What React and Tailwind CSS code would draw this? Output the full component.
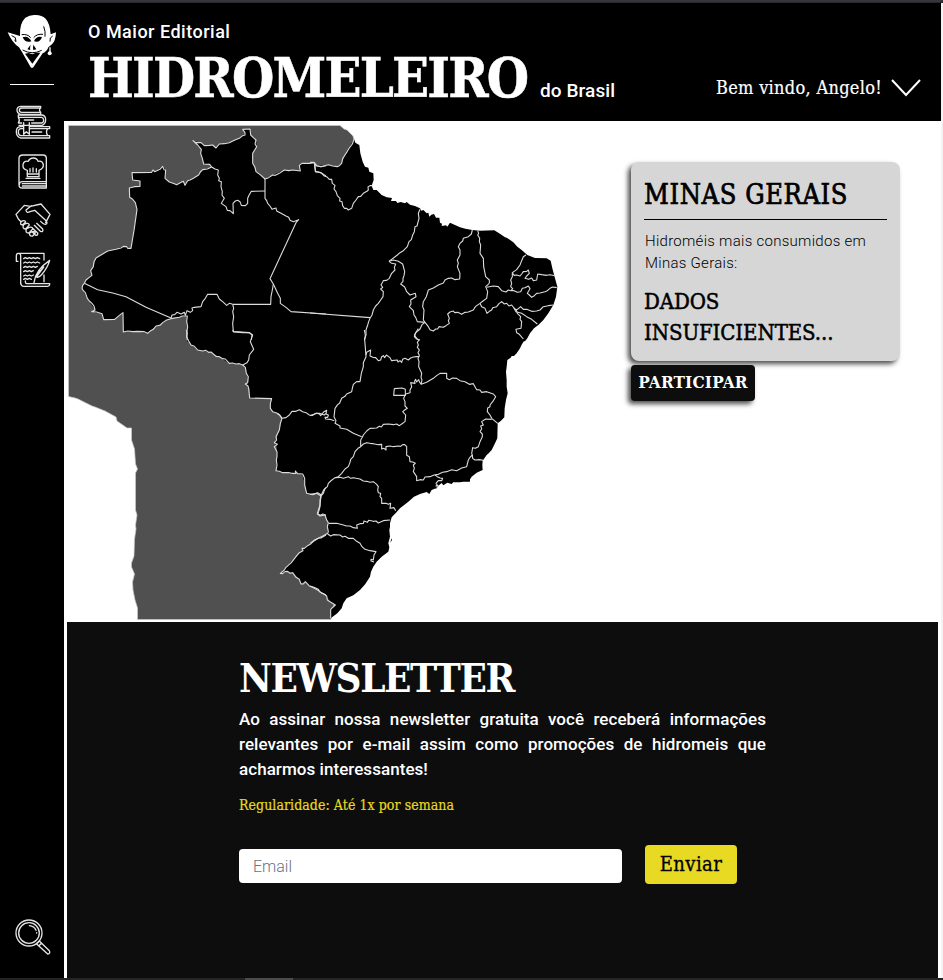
import React from "react";

const serif = "font-['DejaVu_Serif_Condensed','DejaVu_Serif',serif] [font-stretch:condensed]";

// Map pieces: each sheet has its own origin and is drawn at three units per pixel.
const sheets = [
  {
    t: "translate(66 120) scale(.33333)",
    fill: [
      "55,490 60,480 78,466 74,452 82,440 90,414 125,393 150,388 172,379 195,385 213,268 208,248 191,232 190,204 222,199 222,183 200,180 198,158 257,157 261,150 266,155 290,139 299,150 297,175 310,186 332,194 352,184 357,194 365,182 398,165 410,149 437,141 431,133 413,132 409,115 404,100 406,88 381,62 405,68 415,77 440,75 450,84 460,72 490,68 520,55 537,40 530,28 552,27 554,45 570,60 572,80 560,100 560,130 570,155 597,177 620,165 655,150 680,150 703,153 700,136 708,130 745,128 750,137 780,137 780,665 364,665 362,588 340,592 315,594 290,608 270,618 245,640 215,634 172,636 171,578 146,598 113,599 108,581 77,575 87,570 64,535 48,505 50,496",
    ],
    lines: [
      "364,660 362,640 365,620 362,605 364,588 350,588 340,592 315,596 302,600 290,608 282,616 270,618 262,628 254,632 245,640 235,635 215,634 200,635 185,633 172,636 171,578 160,586 146,598 113,599 108,581 92,576 77,575 87,570 84,558 78,550 70,543 64,535 58,518 52,512 48,505 50,496 55,490 60,480 70,472 78,466 74,452 82,440 84,425 90,414 110,402 125,393 150,388 165,384 172,379 182,380 185,385 195,385 205,325 213,268 208,248 200,238 191,232 190,204 205,200 222,199 222,183 200,180 198,158 257,157 261,150 266,155 282,148 290,139 294,149 299,150 297,175 310,186 325,191 332,194 343,188 352,184 357,196 365,182 372,180 382,175 398,165 403,156 410,149 424,147 437,141 431,133 413,132 409,115 404,100 406,88 395,75 381,62 390,68 405,68 415,77 430,76 440,75 450,84 460,72 475,71 490,68 505,61 520,55 530,47 537,45 537,38 530,28 552,27 554,45 562,53 570,60 567,72 572,80 566,90 560,100 560,130 567,142 570,155 585,166 597,177 608,173 620,165 628,166 640,160 655,150 668,152 680,150 703,153 700,136 708,130 730,130 745,128 750,137 765,140 780,137",
      "55,490 95,509 140,519 180,530 240,562 315,594",
      "437,141 447,147 457,150 455,165 460,175 458,182 466,185 465,200 469,215 468,225 475,235 466,250 480,260 484,271 492,272 502,281 501,250 508,243 515,241 522,245 526,256 538,257 545,250 545,235 549,226 556,214 597,213",
      "597,177 597,235 602,242 605,250 612,258 618,268 630,264 632,273 645,280 660,288 668,292 672,301 682,305 698,299 690,308 612,476 622,492 619,510 615,530 614,553 500,553",
      "622,492 628,505 635,520 643,535 643,550 660,562 675,575 780,582",
      "745,130 748,155 765,158 780,168",
      "500,553 503,565 500,575 503,590 500,610 502,635 550,638 558,645 556,660",
      "315,594 318,585 326,584 333,577 345,582 355,577 358,586 363,572 373,577 380,572 378,564 385,562 405,560 410,545 418,535 425,523 453,523 460,537 470,545 482,556 490,550 500,553",
    ],
  },
  {
    t: "translate(310 120) scale(.33333)",
    fill: [
      "0,127 12,127 20,137 45,137 55,134 82,140 95,130 105,105 132,58 136,68 148,75 151,100 158,125 165,140 175,143 178,155 190,160 191,180 185,197 190,210 200,210 215,225 230,232 246,234 243,243 258,243 262,249 272,246 285,250 290,246 300,254 315,258 330,265 334,272 340,270 350,280 355,278 358,290 364,284 372,282 378,293 388,293 390,308 396,311 395,318 408,316 412,320 420,308 430,313 450,322 466,326 487,330 510,332 553,331 572,343 585,352 590,353 610,367 622,380 635,390 652,405 675,414 710,415 722,422 727,445 735,475 742,500 738,530 730,555 715,580 700,600 685,615 672,625 660,640 652,655 645,664 0,664",
    ],
    lines: [
      "0,127 12,127 20,137 33,140 45,137 55,134 68,138 82,140 88,137 95,130 98,116 105,105 112,94 118,84 127,72 132,58",
      "14,130 17,155 25,156 35,160 43,168 50,170 58,178 65,178 67,190 75,196 72,207 78,215 82,227 90,235 89,243 96,245 98,257 103,265 110,265 115,270 125,265 130,250 138,240 145,230 152,229 160,220 172,213 175,210 174,201 180,197 188,197",
      "330,268 325,280 327,295 321,318 315,320 313,335 308,345 304,359 297,365 292,380 280,392 270,398 262,405 237,424",
      "237,424 250,420 265,424 278,432 284,455 282,467 279,475 279,484 272,492 284,501 290,515 300,525 316,520 318,530 302,540 303,552 298,560 310,572 312,585 317,592 322,605 345,607",
      "237,424 245,430 257,432 253,442 255,450 245,460 238,475 230,481 220,482 213,495 218,502 212,507 220,515 219,530 212,540 205,550 197,558 190,570 186,585 180,595 176,605 173,615 168,630 168,645 163,660",
      "0,579 180,593",
      "487,330 484,342 475,350 460,355 458,363 450,370 445,380 450,390 450,405 442,420 445,430 442,440 450,460 449,477 435,479 425,474 415,475 405,480 400,489 385,495 370,504 355,510 349,530 340,545 338,560 342,570 340,600 345,607 355,620 360,629 370,633 377,627 383,627 387,620 400,622 408,617 418,610 415,602 418,595 413,582 420,576 430,573 434,578 443,577 455,583 465,577 475,576 490,570 496,560 510,550 519,543 530,535 533,515 527,500 538,490",
      "503,332 506,340 503,345 509,355 508,365 512,375 510,400 520,415 521,440 527,470 538,480 538,490",
      "530,502 550,498 565,500 575,512 588,516 595,510 603,512 612,512 622,517 632,515 637,505 645,503 655,498 660,506 652,520 658,525 665,532 673,527 680,520 690,519 705,515 712,512 720,505 728,501 740,503",
      "648,405 640,410 635,422 630,435 620,449 607,458 607,470 602,480 605,490 602,500 608,506 603,512",
      "607,458 612,466 620,465 630,468 635,462 640,455 650,454 655,450 658,460 650,468 645,475 656,478 665,474 670,482 680,480 683,462 695,464 710,466 720,464 735,467",
      "510,550 515,560 525,565 531,580 538,574 545,570 548,563 560,560 567,551 575,545 583,552 590,550 597,558 605,555 612,564 618,570 625,566 632,560 640,568 650,568 665,574 680,573 690,570 700,560 715,557 730,555",
      "612,564 618,575 635,580 650,590 665,598 682,612",
      "618,568 622,580 632,590 630,598 635,605 633,625 618,628 620,638 628,643 640,657",
      "345,607 336,614 330,627 325,632 318,637 313,650 320,657 330,660",
    ],
  },
  {
    t: "translate(66 330) scale(.33333)",
    fill: [
      "361,0 364,25 375,45 395,60 435,66 490,100 530,105 538,115 545,140 547,155 540,162 550,175 551,204 617,206 613,235 620,245 638,252 648,265 640,300 627,338 632,350 633,380 631,422 650,428 690,430 710,435 722,490 740,494 755,488 766,495 762,530 755,553 785,556 785,0",
      "785,612 745,632 715,655 660,712 643,730 650,731 665,724 680,728 700,748 705,760 718,755 730,768 755,780 785,798",
    ],
    lines: [
      "361,0 364,10 362,20 368,33 375,45 385,49 395,60 410,63 420,61 428,67 435,66 450,79 460,80 470,86 478,87 490,100 500,99 510,102 520,101 530,105 538,112 541,130 547,140 545,158 538,162 546,168 548,175 551,204 617,206 613,220 613,235 620,245 630,248 638,252 648,265 643,280 640,300 630,320 632,330 625,338 634,343 625,350 633,365 633,380 631,390 633,405 630,422 640,424 650,428 670,428 678,430 690,430 688,423 695,431 710,432 716,445 716,465 722,490 740,494 755,488 766,495 762,510 762,530 758,545 755,553 764,556 770,552 780,556",
      "780,615 765,624 758,624 745,632 735,641 725,647 715,655 708,655 711,662 700,668 690,680 676,698 660,712 655,720 643,730 650,731 657,725 665,724 672,730 680,728 690,742 700,748 705,762 712,762 718,755 730,768 742,773 755,780 768,790 780,795",
      "500,0 502,5 530,8 550,8 560,15 553,35 563,58 550,75 548,90 543,98 530,105",
      "635,252 642,256 648,265 660,263 670,255 678,244 690,244 700,239 710,245 720,248 730,255 740,256 750,250 760,250 775,255 780,250",
      "766,495 773,480 780,473",
    ],
  },
  {
    t: "translate(310 330) scale(.33333)",
    fill: [
      "0,-4 665,-4 656,11 645,28 635,44 630,55 620,70 612,78 605,78 602,83 592,90 590,110 588,125 590,150 590,170 593,190 588,210 584,235 583,262 573,272 563,280 562,325 555,340 545,360 536,370 530,375 518,392 517,405 518,420 500,428 485,440 480,448 480,455 460,455 450,457 430,456 440,447 433,453 425,462 412,458 400,466 395,459 385,467 375,478 385,472 365,480 358,492 350,486 330,492 312,500 295,515 270,535 258,548 245,562 240,580 240,590 238,600 240,620 235,640 238,652 235,665 215,680 200,695 190,710 183,725 180,740 166,762 150,780 130,796 110,805 100,820 95,835 82,850 62,865 62,838 76,825 60,815 50,798 25,778 0,768 0,640 25,625 53,610 55,578 45,555 22,553 30,525 33,498 20,490 0,493",
      "244,625 241,638 246,630",
    ],
    lines: [
      "0,493 20,490 33,498 30,525 22,551 30,558 45,555 50,570 55,578 52,590 55,605 53,610 40,617 25,625 15,629 0,640",
      "0,768 12,772 25,778 30,786 42,792 50,798 52,810 60,815 76,825 62,838 62,865",
      "163,0 166,15 164,30 165,40 168,80 160,98 160,110 154,130 150,155 140,155 130,163 127,175 125,185 110,192 105,199 95,205 89,219 83,224 75,235 72,260 78,272 75,280 90,288 90,294 110,298 130,310 155,320",
      "168,75 170,67 182,60 180,78 189,82 197,83 205,92 212,90 215,80 220,77 224,83 229,75 240,83 245,92 262,90 264,96 270,92 275,97 278,88 285,85 295,90 302,84 310,81 320,80 328,80",
      "325,-4 313,15 320,25 327,30 322,37 325,45 322,52 328,60 324,68 328,76 324,86 327,95 326,110 335,130 333,142 336,150 333,163",
      "333,163 328,155 326,149 320,156 317,148 314,153 315,160 302,158 305,170 300,180 300,188 287,192 281,205 285,215 285,228 292,235 284,240 278,245 287,255 285,275 275,282 268,287 260,282 250,284 235,282 220,283 214,291 208,289 200,294 180,295 170,303 160,315 157,322 152,330 152,350",
      "333,163 350,157 370,145 380,137 390,130 410,130 410,145 418,149 428,144 440,145 450,152 465,155 478,163 490,161 500,179 510,180 515,187 530,185 550,192 557,200 548,215 540,225 540,230 533,234 532,245 540,255 545,265 563,280",
      "545,268 527,267 515,275 520,285 512,288 515,296 510,305 517,312 517,320 510,335 505,350 496,355 488,353 485,370 487,375 480,382 475,390 470,410 455,414 440,422 425,419 410,425 398,427 385,433 372,435 360,440 345,441 340,450 330,449 320,452 320,440 310,425 313,415 310,405 316,400 308,396 300,395 298,380 290,376 290,365 290,350 284,344 278,344 272,349 265,348 250,350 240,348 228,350 228,360 222,355 215,357 215,343 205,344 190,341 180,340 170,338 160,342 152,350",
      "487,375 488,385 495,390 508,389 520,391",
      "375,435 382,440 390,444 398,445 395,452 385,452 378,460 382,465 378,468 386,468",
      "152,350 144,355 135,365 130,380 122,388 120,397 115,410 105,417 95,430 85,440 75,443 62,453 55,460 52,470 45,476 40,490 33,498",
      "75,443 90,442 100,445 115,440 122,445 130,443 150,447 160,453 170,454 180,457 190,455 200,463 205,470 203,480 205,488 212,490 210,500 215,505 215,520 228,520 235,523 242,520 240,535 252,533 257,542",
      "57,580 80,580 100,585 110,588 120,588 130,593 142,595 140,585 150,581 160,580 162,573 172,577 176,571 190,574 198,573 205,579 220,572 240,570",
      "53,612 62,618 70,614 90,615 98,621 105,619 115,625 130,625 140,634 150,640 156,650 165,658 180,662 198,665 192,675 190,690 183,688 183,693 192,696",
      "0,257 20,250 28,252 32,257 42,245 50,241 48,252 55,255 53,262 45,262 47,267 60,268 73,272",
      "253,176 276,174 286,178 286,196 251,196 253,176",
    ],
  },
];

function BrazilMap() {
  return (
    <svg className="block h-[501px] w-[500px]" viewBox="64 121 500 501" aria-label="Mapa do Brasil">
      <path
        fill="#505050"
        stroke="#c8c8c8"
        strokeWidth=".7"
        d="M68.500 125.500H340L344 129L347 130L353 136L355 143L345 175L325 320L335 600L331 619.500H137.500L137.500 608L135 600L133 590L132.500 582L134.500 574L131.500 567V563L134 556L134.500 539L136 529L135.500 525L137 515L135.500 510L135.500 473L137.500 469L135.500 464L134.500 449L131.500 440V428H127L117 421L116 417L105 411L95 407L92 406L78 399L75 398L68.500 396.500Z"
      />
      {sheets.map((s) => (
        <g key={s.t} transform={s.t}>
          {s.fill.map((p) => (
            <polygon key={p} points={p} fill="#000" />
          ))}
        </g>
      ))}
      {sheets.map((s) => (
        <g key={s.t} transform={s.t} fill="none" stroke="#dcdcdc" strokeWidth="3.300" strokeLinejoin="round">
          {s.lines.map((p) => (
            <polyline key={p} points={p} />
          ))}
        </g>
      ))}
    </svg>
  );
}

function Logo() {
  return (
    <svg className="h-[55px] w-[50px]" viewBox="21 42 150 165" fill="#fff">
      <path d="M23 97L60 108Q58 70 76 53Q90 44 105 45Q124 44 137 56Q150 70 152 103L168 97Q167 123 156 133L145 142Q141 154 128 160L99 203H93L66 156L57 142Q36 128 23 97Z" />
      <circle cx="149" cy="160" r="6" />
      <path d="M150 142v15" stroke="#fff" strokeWidth="4" />
      <path fill="#000" d="M75 161L86 159L97 163L108 158L121 158L97 191Z" />
      <path fill="#000" d="M68 112Q84 105 94 124Q76 130 68 112ZM102 124Q108 107 126 111Q120 130 102 124Z" />
      <path fill="#000" d="M92 134l-10 14 9 2-1-6zM100 134l9 14-9 2-1-6z" />
      <path fill="none" stroke="#000" strokeWidth="3" d="M65 104Q82 101 92 113M101 113Q110 101 129 103M131 79Q137 94 135 110M35 107l11 6 2 12-5-5M68 150Q96 166 125 151M158 108l-7 6-1 11" />
    </svg>
  );
}

function Icon({ children }) {
  return (
    <svg
      className="size-9"
      viewBox="0 0 108 108"
      fill="none"
      stroke="#e5e5e5"
      strokeWidth="4"
      strokeLinecap="round"
      strokeLinejoin="round"
    >
      {children}
    </svg>
  );
}

function Sidebar() {
  return (
    <aside className="flex w-16 shrink-0 flex-col items-center bg-black pt-[11px] pb-[23px]">
      <Logo />
      <div className="mt-[15px] h-px w-11 bg-white" />
      <nav className="mt-[20px] ml-px flex flex-col gap-[13px]">
        <Icon>
          <path d="M77 4H17Q6 5 6 15T17 28H77M77 4V9H20Q13 10 13 16T20 22H77M77 9Q70 15 77 22V28" />
          <path d="M11 30H81Q92 32 92 44T81 61H12M10 30V37H80Q86 39 86 46T80 54H50M10 37Q16 45 10 54H20M28 45H56" />
          <path d="M24 65H16Q4 66 4 80T16 99H103M44 65H104V71H45M24 71H17Q10 72 10 81T17 92H104V99M98 71Q91 80 98 92M51 81H80" />
          <path d="M26 53V88L34 80L43 88V53" />
        </Icon>
        <Icon>
          <path d="M24 3H84Q94 3 94 13V102H22Q12 102 12 92V13Q12 3 24 3ZM94 83H22Q13 83 13 92M22 89H91M22 96H91" />
          <path d="M37 68V49Q22 46 24 32Q27 19 40 22Q44 12 55 12Q66 12 69 22Q82 19 85 32Q86 44 72 49V68ZM45 54V44M54 54V42M64 54V44M36 60H72M33 73H75" />
        </Icon>
        <Icon>
          <path d="M28 7L3 34L10 48L18 56M78 3L105 34L92 59M28 7L46 10L78 3M49 8L33 21Q34 32 45 26L59 22L91 51Q101 62 91 64Q86 65 77 55" />
          <path d="M65 61L83 78Q86 88 76 85L58 67M52 75L68 90Q70 99 61 96L52 87M18 56Q14 67 23 65L32 57Q29 49 18 56ZM26 65Q20 77 32 78L43 66Q40 57 26 65ZM34 78Q30 91 42 90L54 77Q50 67 34 78ZM44 90Q42 101 53 99L61 90Q58 81 44 90Z" />
        </Icon>
        <Icon>
          <path d="M17 96V14Q18 4 9 4Q4 4 4 13V28H9M9 4H87V24M17 90Q17 104 28 103H98Q105 102 104 95H35Q31 95 31 87M87 69V89" />
          <path d="M26 20l5-3 6 3 6-3 6 3 6-3 6 3 6-3 7 3M26 33l5-3 6 3 6-3 6 3 6-3 6 3 6-3 7 3M26 46l5-3 6 3 6-3 6 3 6-3 6 3 6-3M26 59l5-3 6 3 6-3 6 3 6-3M26 72l5-3 6 3 6-3 6 3 6-3M26 82l5-3 6 3 6-3 6 3" />
          <path d="M57 92Q61 54 104 25Q98 47 79 69Q71 78 64 75M64 75L86 45M74 52Q75 60 69 66" />
        </Icon>
      </nav>
      <div className="mt-auto ml-px">
        <Icon>
          <circle cx="42" cy="42" r="39" />
          <circle cx="42" cy="42" r="31" />
          <path d="M43 20Q58 21 63 34M65 41V42M66 73L73 66M73 66L103 95Q107 104 98 105L65 75M72 80L79 73" />
        </Icon>
      </div>
    </aside>
  );
}

function Header() {
  return (
    <header className="flex h-[118px] w-[877px] shrink-0 justify-between bg-black pl-6 text-white">
      <div className="pt-[18px]">
        <p className="font-[Roboto] text-[18px] leading-[22px] font-medium tracking-[0.5px]">O Maior Editorial</p>
        <div className="flex items-baseline">
          <h1 className={`${serif} w-[452px] text-[54px] leading-[70px] font-bold tracking-[-1.8px] whitespace-nowrap [-webkit-text-stroke:0.5px_white]`}>
            HIDROMELEIRO
          </h1>
          <span className="font-[Roboto] text-[19px] font-medium tracking-[0.1px]">do Brasil</span>
        </div>
      </div>
      <div className="mt-[70px] flex h-[30px] items-center gap-[9px] pr-5">
        <span className={`${serif} text-[18px] leading-[30px] tracking-[0.3px] whitespace-nowrap [-webkit-text-stroke:0.2px_white]`}>
          Bem vindo, Angelo!
        </span>
        <svg className="h-5 w-[30px]" viewBox="0 0 30 20" fill="none" stroke="#fff" strokeWidth="2">
          <path d="M1 2L15 17L29 2" />
        </svg>
      </div>
    </header>
  );
}

function StateCard() {
  return (
    <section className="ml-[67px] flex flex-col items-start gap-1 pt-[41px]">
      <article className="h-[199px] w-[269px] rounded-lg bg-[#d6d6d6] px-[13px] pt-3 text-black shadow-[-3px_3px_5px_rgba(0,0,0,.7)]">
        <h2 className={`${serif} h-[46px] border-b border-black pt-px text-[27px] leading-[40px] tracking-[0.6px] whitespace-nowrap [-webkit-text-stroke:0.7px_black]`}>
          MINAS GERAIS
        </h2>
        <p className="mt-[10px] pl-px font-[Roboto] text-[15px] leading-[22px] font-light tracking-[0.28px]">
          Hidroméis mais consumidos em Minas Gerais:
        </p>
        <p className={`${serif} mt-3 text-[22px] leading-[31px] tracking-[-0.1px] [-webkit-text-stroke:0.5px_black]`}>
          DADOS
          <br />
          INSUFICIENTES...
        </p>
      </article>
      <button className={`${serif} h-9 w-[124px] rounded bg-[#0d0d0d] text-[17px] font-bold tracking-[0.2px] text-white shadow-[-3px_3px_5px_rgba(0,0,0,.7)]`}>
        PARTICIPAR
      </button>
    </section>
  );
}

function Newsletter() {
  return (
    <section className="ml-[3px] h-[356px] w-[871px] bg-[#0d0d0d] pt-[31px] pl-[172px] text-white">
      <h2 className={`${serif} text-[40px] leading-[50px] font-bold tracking-[-1.4px] whitespace-nowrap`}>NEWSLETTER</h2>
      <p className="mt-1 w-[527px] text-justify font-[Roboto] text-[17px] leading-[25px] font-medium tracking-[0.05px]">
        Ao assinar nossa newsletter gratuita você receberá informações relevantes por e-mail assim como promoções de
        hidromeis que acharmos interessantes!
      </p>
      <p className={`${serif} mt-3 text-[14px] leading-[22px] tracking-[0.06px] whitespace-nowrap text-[#e8d922] [-webkit-text-stroke:0.2px_#e8d922]`}>
        Regularidade: Até 1x por semana
      </p>
      <form className="mt-[29px] flex items-end gap-[23px]">
        <input
          className="mb-px h-[34px] w-[383px] rounded bg-white px-[14px] font-[Roboto] text-[16px] font-light placeholder:text-[#6b7280]"
          placeholder="Email"
        />
        <button
          type="button"
          className={`${serif} h-[39px] w-[92px] rounded bg-[#e8d922] pb-0.5 text-[20px] tracking-[0.4px] text-black [-webkit-text-stroke:0.3px_black]`}
        >
          Enviar
        </button>
      </form>
    </section>
  );
}

export default function App() {
  return (
    <div className="flex h-[980px] w-[943px] flex-col overflow-hidden bg-white">
      <div className="h-[3px] shrink-0 border-b border-[#28282b] bg-[#35353c]" />
      <div className="flex h-[975px]">
        <Sidebar />
        <main className="flex w-[877px] flex-col">
          <Header />
          <div className="flex h-[501px]">
            <BrazilMap />
            <StateCard />
          </div>
          <Newsletter />
        </main>
        <div className="w-0.5 bg-[#f3f3f3]" />
      </div>
      <div className="h-0.5 shrink-0 bg-[#242424] pl-[245px]">
        <div className="h-0.5 w-12 bg-[#4b4b4b]" />
      </div>
    </div>
  );
}
